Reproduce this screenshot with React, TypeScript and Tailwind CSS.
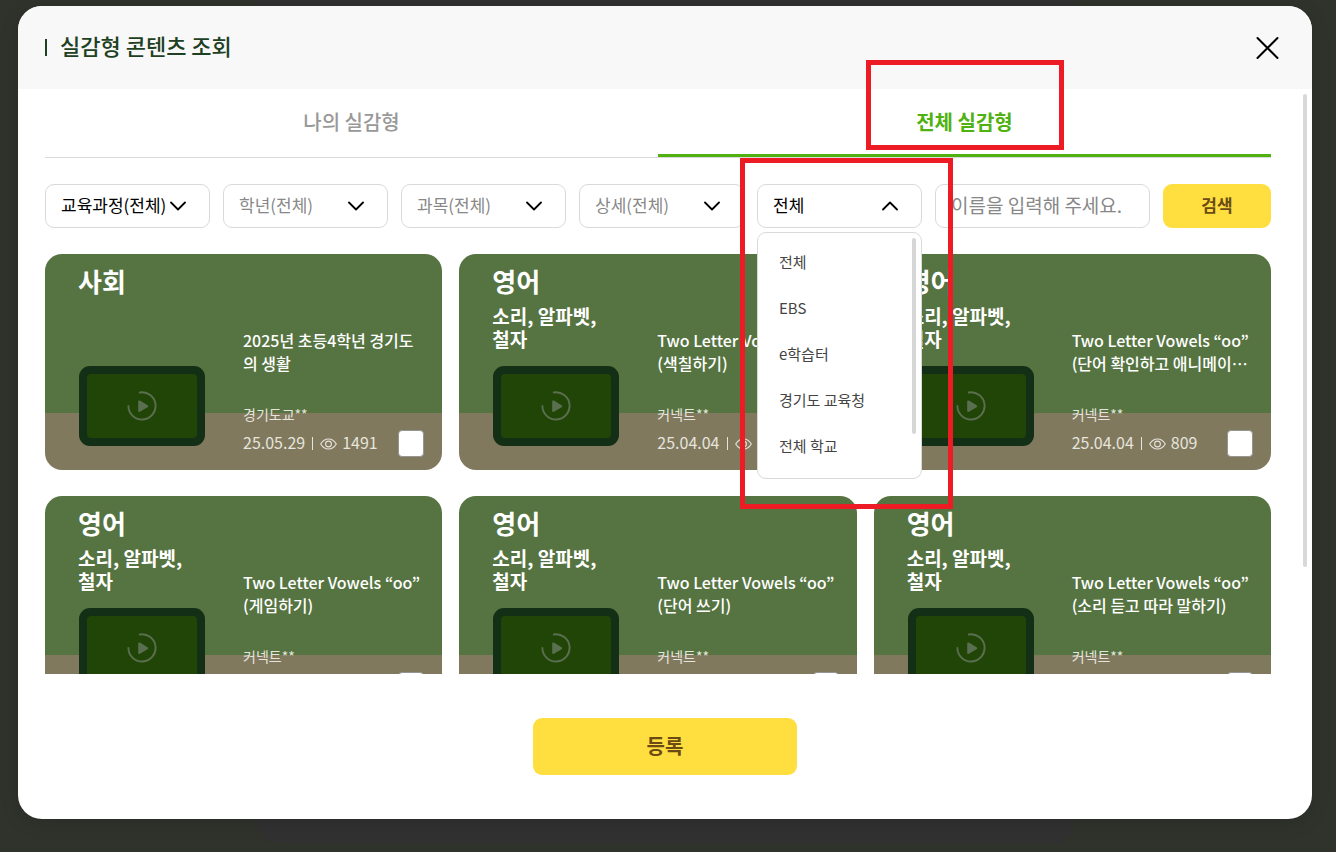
import React from 'react';

interface ContentItem {
  id: number;
  subject: string;
  unit?: string;
  title: string[];
  author: string;
  date: string;
  views: string;
}

const CONTENTS: ContentItem[] = [
  { id: 1, subject: '사회', title: ['2025년 초등4학년 경기도', '의 생활'], author: '경기도교**', date: '25.05.29', views: '1491' },
  { id: 2, subject: '영어', unit: '소리, 알파벳, 철자', title: ['Two Letter Vowels “oo”', '(색칠하기)'], author: '커넥트**', date: '25.04.04', views: '1024' },
  { id: 3, subject: '영어', unit: '소리, 알파벳, 철자', title: ['Two Letter Vowels “oo”', '(단어 확인하고 애니메이…'], author: '커넥트**', date: '25.04.04', views: '809' },
  { id: 4, subject: '영어', unit: '소리, 알파벳, 철자', title: ['Two Letter Vowels “oo”', '(게임하기)'], author: '커넥트**', date: '25.04.04', views: '782' },
  { id: 5, subject: '영어', unit: '소리, 알파벳, 철자', title: ['Two Letter Vowels “oo”', '(단어 쓰기)'], author: '커넥트**', date: '25.04.04', views: '640' },
  { id: 6, subject: '영어', unit: '소리, 알파벳, 철자', title: ['Two Letter Vowels “oo”', '(소리 듣고 따라 말하기)'], author: '커넥트**', date: '25.04.04', views: '598' },
];

const SOURCES = ['전체', 'EBS', 'e학습터', '경기도 교육청', '전체 학교'];

const ChevronIcon: React.FC<{ up?: boolean }> = ({ up }) => (
  <svg
    viewBox="0 0 16 10"
    fill="none"
    stroke="#000"
    strokeWidth="1.8"
    strokeLinecap="round"
    strokeLinejoin="round"
    className="pointer-events-none absolute right-6 top-[17px] h-[10px] w-4"
  >
    <path d={up ? 'M1 8.5 8 1.500 15 8.500' : 'M1 1.500 8 8.500 15 1.500'} />
  </svg>
);

const EyeIcon = () => (
  <svg viewBox="0 0 17 12" fill="none" stroke="currentColor" strokeWidth="1.1" className="h-3 w-[17px]">
    <path d="M.7 6C2.600 2.800 5.300 1 8.500 1s5.900 1.800 7.800 5c-1.900 3.200-4.600 5-7.800 5S2.600 9.200.7 6Z" />
    <circle cx="8.500" cy="6" r="2.900" />
  </svg>
);

const PlayIcon = () => (
  <svg viewBox="0 0 30 30" fill="none" className="h-[30px] w-[30px] text-[#5a6f50]">
    <path d="M1.400 15A13.600 13.600 0 1 0 12.800 1.500" stroke="currentColor" strokeWidth="1.900" strokeLinecap="round" />
    <path d="M11.200 10.500v9.200c0 1.100.8 1.500 1.700 1l7.700-4.500c.9-.5.9-1.500 0-2l-7.700-4.600c-.9-.5-1.700-.1-1.700.9Z" fill="currentColor" />
  </svg>
);

interface FilterSelectProps {
  label: string;
  value: string;
  active?: boolean;
}

const FilterSelect: React.FC<FilterSelectProps> = ({ label, value, active }) => (
  <div className="relative">
    <select
      aria-label={label}
      defaultValue={value}
      className={`h-11 w-full appearance-none rounded-[9px] border border-[#d9d9d9] bg-white pb-[2px] pl-[15px] text-[17px] leading-6 ${active ? 'text-black' : 'text-[#888]'}`}
    >
      <option>{value}</option>
    </select>
    <ChevronIcon />
  </div>
);

const SourceSelect = () => (
  <div className="relative">
    <select
      aria-label="제공처"
      defaultValue="전체"
      className="h-11 w-full appearance-none rounded-[9px] border border-[#d9d9d9] bg-white pb-[2px] pl-[15px] text-[17px] leading-6 text-black"
    >
      {SOURCES.map((source) => (
        <option key={source}>{source}</option>
      ))}
    </select>
    <ChevronIcon up />

    {/* Opened list */}
    <div className="absolute inset-x-0 top-12 z-10 h-[247px] rounded-[9px] border border-[#d9d9d9] bg-white pt-[6px]">
      <ul>
        {SOURCES.map((source) => (
          <li key={source}>
            <button type="button" className="flex h-[46px] w-full items-center pl-[21px] text-[15px] leading-5 text-[#444]">
              {source}
            </button>
          </li>
        ))}
      </ul>
      <div className="absolute right-[5px] top-[5px] h-[196px] w-1 rounded-full bg-[#d6d6d6]" />
    </div>

    {/* Highlight frame */}
    <div className="pointer-events-none absolute -left-[17px] -right-[31px] -top-[26px] z-20 h-[351px] border-5 border-[#ed1c24]" />
  </div>
);

const ContentCard: React.FC<{ item: ContentItem }> = ({ item }) => (
  <article className="flex h-[216px] rounded-[17px] bg-linear-to-b from-[#567441] from-[159px] to-[#80795d] to-[159px] pl-[33px] pr-[18px] text-white">
    <div className="flex w-[165px] shrink-0 flex-col pb-6 pt-[11px]">
      <h3 className="text-[26px] font-bold leading-8">{item.subject}</h3>
      {item.unit && <p className="mt-[7px] w-[130px] break-keep text-[19px] font-bold leading-[23px]">{item.unit}</p>}
      <div className="ml-px mt-auto flex h-20 w-[126px] items-center justify-center rounded-[11px] border-8 border-[#132f16] bg-[#132f16]">
        <div className="flex h-full w-full items-center justify-center rounded-[4px] bg-[#214507]">
          <PlayIcon />
        </div>
      </div>
    </div>
    <div className="flex min-w-0 flex-1 flex-col pb-[13px] pt-[75px]">
      <h4 className="whitespace-nowrap text-[16px] font-medium leading-[23px]">
        {item.title.map((line) => (
          <span key={line} className="block">{line}</span>
        ))}
      </h4>
      <p className="mt-[29px] text-[14px] leading-5 text-[#e6e4de]">{item.author}</p>
      <div className="mt-auto flex h-[27px] items-center justify-between">
        <div className="flex items-center text-[16px] leading-6 text-[#e6e4de]">
          <span className="pb-1">{item.date}</span>
          <span className="mx-[7px] h-[13px] w-px bg-[#e6e4de]" />
          <EyeIcon />
          <span className="ml-[5px] pb-1">{item.views}</span>
        </div>
        <input
          type="checkbox"
          aria-label={`${item.title.join(' ')} 선택`}
          className="h-[27px] w-[26px] appearance-none rounded-[4px] border border-[#959595] bg-white"
        />
      </div>
    </div>
  </article>
);

const App = () => {
  return (
    <main className="relative min-h-screen bg-[#30322c] px-6 pb-[33px] pl-[18px] pt-[6px] font-['Noto_Sans_CJK_KR',sans-serif]">
      {/* Dimmed page behind the dialog */}
      <div className="absolute bottom-[9px] left-[257px] right-[262px] top-0 rounded-b-[20px] bg-[#323132]" />

      <section
        role="dialog"
        aria-labelledby="dialog-title"
        className="relative overflow-hidden rounded-[24px] bg-white shadow-[0_4px_20px_rgba(0,0,0,0.12)]"
      >
        <header className="flex h-[83px] items-center justify-between bg-[#f8f8f8] pl-[27px] pr-[33px]">
          <div className="flex items-center gap-[13px]">
            <span className="h-[17px] w-[2px] bg-[#1e4023]" />
            <h1 id="dialog-title" className="pb-[6px] text-[22px] font-medium leading-8 text-[#1e4023]">실감형 콘텐츠 조회</h1>
          </div>
          <button type="button" aria-label="닫기">
            <svg viewBox="0 0 24 24" fill="none" stroke="#000" strokeWidth="2" strokeLinecap="round" className="h-6 w-6">
              <path d="M2.500 2 22.500 22M22.500 2 2.500 22" />
            </svg>
          </button>
        </header>

        <div className="relative pb-11 pl-[27px] pr-[41px]">
          <div role="tablist" className="grid h-[69px] grid-cols-2 border-b border-[#d9d9d9] text-[20px] leading-8">
            <button type="button" role="tab" aria-selected="false" className="pb-[3px] font-medium text-[#999]">나의 실감형</button>
            <button type="button" role="tab" aria-selected="true" className="relative border-b-3 border-[#4fb211] font-bold text-[#4fb211]">
              전체 실감형
              <span className="pointer-events-none absolute -top-[29px] left-1/2 h-[90px] w-[198px] -translate-x-1/2 border-5 border-[#ed1c24]" />
            </button>
          </div>

          <form className="mt-[26px] grid grid-cols-[repeat(5,165fr)_215fr_108fr] gap-[13px]">
            <FilterSelect label="교육과정" value="교육과정(전체)" active />
            <FilterSelect label="학년" value="학년(전체)" />
            <FilterSelect label="과목" value="과목(전체)" />
            <FilterSelect label="상세" value="상세(전체)" />
            <SourceSelect />
            <input
              type="text"
              aria-label="이름"
              placeholder="이름을 입력해 주세요."
              className="h-11 w-full rounded-[9px] border border-[#d9d9d9] bg-white px-[15px] pb-[3px] text-[19px] leading-6 placeholder:text-[#888]"
            />
            <button type="button" className="h-11 rounded-[9px] bg-[#ffdf40] pb-[2px] text-[17px] font-bold leading-6 text-[#6b4a14]">검색</button>
          </form>

          <div className="mt-[26px] grid h-[420px] grid-cols-3 gap-x-[17px] gap-y-[26px] overflow-hidden">
            {CONTENTS.map((item) => (
              <ContentCard key={item.id} item={item} />
            ))}
          </div>

          <div className="-mr-[14px] mt-11 flex justify-center">
            <button type="button" className="h-[57px] w-[264px] rounded-[9px] bg-[#ffdf40] pb-[2px] text-[20px] font-bold leading-8 text-[#6b4a14]">등록</button>
          </div>

          <div className="absolute right-[5px] top-[5px] h-[473px] w-1 rounded-full bg-[#d9d9d9]" />
        </div>
      </section>
    </main>
  );
};

export default App;
